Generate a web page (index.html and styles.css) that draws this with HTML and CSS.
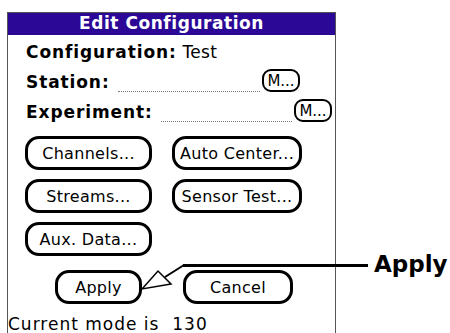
FILE: index.html
```html
<!DOCTYPE html>
<html lang="en">
<head>
  <meta charset="UTF-8" />
  <title>Edit Configuration</title>
  <link rel="stylesheet" href="styles.css">
</head>
<body>
  <div class="screen">
    <div class="titlebar">Edit Configuration</div>

    <div class="form">
      <div class="row">
        <span class="label">Configuration:</span>&nbsp;<span class="value">Test</span>
      </div>
      <div class="row row-station">
        <span class="label">Station:</span>
        <span class="dots"></span>
        <button class="btn-small">M...</button>
      </div>
      <div class="row row-experiment">
        <span class="label">Experiment:</span>
        <span class="dots"></span>
        <button class="btn-small">M...</button>
      </div>

      <div class="grid">
        <button class="btn">Channels...</button>
        <button class="btn">Auto Center...</button>
        <button class="btn">Streams...</button>
        <button class="btn">Sensor Test...</button>
        <button class="btn">Aux. Data...</button>
      </div>

      <div class="actions">
        <button class="btn btn-apply">Apply</button>
        <button class="btn btn-cancel">Cancel</button>
      </div>

      <div class="status">Current mode is&nbsp; 130</div>
    </div>
  </div>

  <!-- callout pointing at the Apply button -->
  <svg class="callout-line" width="450" height="333" viewBox="0 0 450 333">
    <line x1="183" y1="265.5" x2="368" y2="265.5" stroke="#000" stroke-width="3" />
    <line x1="184" y1="265" x2="165" y2="277" stroke="#000" stroke-width="2" />
    <polygon points="142,289 158,271 171,284" fill="#fff" stroke="#000" stroke-width="1.5" />
  </svg>
  <div class="callout-label">Apply</div>
</body>
</html>
```

FILE: styles.css
```css
body {
  margin: 0;
  width: 450px;
  height: 333px;
  overflow: hidden;
  background: #fff;
  position: relative;
  font-family: 'DejaVu Sans', sans-serif;
  color: #000;
}

.screen {
  margin: 12px 0 0 7px;
  width: 327px;
  height: 320px;
  border: 1px solid #555;
  border-bottom: none;
}

.titlebar {
  height: 22px;
  background: #2c0896;
  color: #fff;
  font-weight: bold;
  font-size: 17px;
  letter-spacing: 0.55px;
  line-height: 21px;
  text-align: center;
}

.form {
  padding: 2px 0 0 18px;
}

.row {
  display: flex;
  align-items: center;
  height: 30px;
  font-size: 17px;
  line-height: 20px;
  letter-spacing: 0.3px;
}

.label {
  font-weight: bold;
  letter-spacing: 0.9px;
}

.row-station {
  width: 274px;
}

.row-experiment {
  width: 306px;
}

.dots {
  flex: 1;
  align-self: flex-end;
  border-bottom: 1px dotted #777;
  margin: 0 2px 5px 8px;
}

.btn-small {
  align-self: flex-start;
  margin-top: 2px;
  width: 38px;
  height: 23px;
  padding: 0;
  font-family: 'DejaVu Sans', sans-serif;
  font-size: 15px;
  line-height: 18px;
  color: #000;
  background: #fff;
  border: 2px solid #000;
  border-radius: 9px;
}

.grid {
  display: grid;
  grid-template-columns: 127px 130px;
  column-gap: 20px;
  row-gap: 9px;
  margin: 9px 0 0 -1px;
}

.btn {
  height: 34px;
  padding: 0;
  font-family: 'DejaVu Sans', sans-serif;
  font-size: 16px;
  letter-spacing: 0.3px;
  color: #000;
  background: #fff;
  border: 3px solid #000;
  border-radius: 14px;
}

.actions {
  display: flex;
  gap: 41px;
  margin: 14px 0 0 29px;
}

.btn-apply {
  width: 87px;
}

.btn-cancel {
  width: 110px;
}

.status {
  margin: 12px 0 0 -18px;
  font-size: 17px;
  line-height: 16px;
  letter-spacing: 1px;
}

.callout-line {
  position: absolute;
  left: 0;
  top: 0;
}

.callout-label {
  position: absolute;
  left: 374px;
  top: 253px;
  font-size: 23px;
  line-height: 23px;
  font-weight: bold;
}
```
